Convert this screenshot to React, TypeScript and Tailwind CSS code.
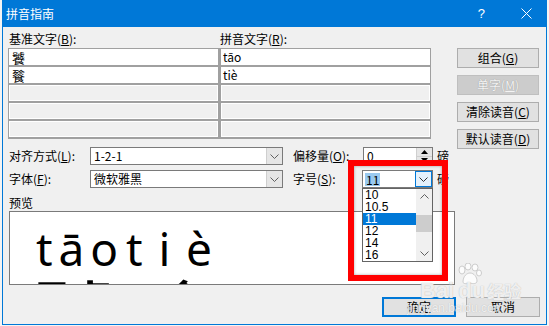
import type { ReactNode } from "react";

function Mn({ t, k, colon = true }: { t: string; k: string; colon?: boolean }) {
  return (
    <>
      {t}(<span className="underline underline-offset-1">{k}</span>){colon ? ":" : ""}
    </>
  );
}

function Btn({
  children,
  className = "border-[#adadad] bg-[#e1e1e1] text-black",
  extra = "",
}: {
  children: ReactNode;
  className?: string;
  extra?: string;
}) {
  return (
    <div className={"flex h-[20px] items-center justify-center border text-[12px] leading-none " + className + " " + extra}>
      {children}
    </div>
  );
}

function Chevron({ className = "" }: { className?: string }) {
  return (
    <svg width="9" height="5" viewBox="0 0 9 5" className={className}>
      <polyline points="0.5,0.5 4.5,4.5 8.5,0.5" fill="none" stroke="currentColor" strokeWidth="1" />
    </svg>
  );
}

function Combo({ value }: { value: string }) {
  return (
    <div className="flex h-[18px] w-[193px] items-stretch border border-[#7a7a7a] bg-white">
      <div className="flex flex-1 items-center pl-[3px] text-[12px] leading-none">{value}</div>
      <div className="flex w-[16px] items-center justify-center border-l border-[#cfcfcf] bg-[#e6e6e6] text-[#606060]">
        <Chevron />
      </div>
    </div>
  );
}

const gridRows = [
  { base: "饕", py: "tāo", filled: true },
  { base: "餮", py: "tiè", filled: true },
  { base: "", py: "", filled: false },
  { base: "", py: "", filled: false },
  { base: "", py: "", filled: false },
];

export default function App() {
  return (
    <div className="relative h-[326px] w-[549px] overflow-hidden bg-[#f4f4f4] font-['Noto_Sans_CJK_SC',sans-serif] text-black">
      <div className="ml-[2px] flex h-[325px] w-[545px] flex-col">
        {/* title bar */}
        <div className="flex h-[27px] items-center bg-[#0078d7] text-white">
          <span className="ml-[4px] text-[12px] leading-none">拼音指南</span>
          <span className="ml-auto mr-[36px] text-[13px] leading-none font-['Liberation_Sans',sans-serif]">?</span>
          <svg width="11" height="11" viewBox="0 0 11 11" className="mr-[15px]">
            <path d="M0.5 0.5 L10.5 10.5 M10.5 0.5 L0.5 10.5" stroke="white" strokeWidth="1" />
          </svg>
        </div>

        {/* body */}
        <div className="relative flex flex-1 flex-col border-x border-b border-[#0078d7] bg-[#f0f0f0] pt-[5px]">
          <div className="flex h-[107px] items-start">
            <div className="ml-[5px] flex flex-col">
              <div className="grid h-[14px] grid-cols-[212px_211px] items-center text-[12px] leading-none">
                <span className="pl-[1px]">
                  <Mn t="基准文字" k="B" />
                </span>
                <span>
                  <Mn t="拼音文字" k="R" />
                </span>
              </div>
              <div className="mt-[2px] grid w-[423px] grid-cols-[209px_209px] gap-x-[3px] gap-y-[2px] bg-[#a0a0a0] p-px pb-[2px]">
                {gridRows.map((r, i) => (
                  <div key={i} className="contents">
                    <div
                      className={
                        "flex h-[16px] items-center text-[13px] leading-none " +
                        (r.filled ? "bg-white pl-[3px]" : "border border-white bg-[#f0f0f0]")
                      }
                    >
                      {r.base}
                    </div>
                    <div
                      className={
                        "flex h-[16px] items-center text-[12px] leading-none " +
                        (r.filled ? "bg-white pl-[2px]" : "border border-white bg-[#f0f0f0]")
                      }
                    >
                      {r.py}
                    </div>
                  </div>
                ))}
              </div>
            </div>
            <div className="ml-[26px] flex w-[82px] flex-col gap-[7px] pt-[16px]">
              <Btn>
                <Mn t="组合" k="G" colon={false} />
              </Btn>
              <Btn className="border-[#bfbfbf] bg-[#cccccc] text-[#f4f4f4] [text-shadow:0_0_1px_#8a8a8a]">
                <Mn t="单字" k="M" colon={false} />
              </Btn>
              <Btn>
                <Mn t="清除读音" k="C" colon={false} />
              </Btn>
              <Btn>
                <Mn t="默认读音" k="D" colon={false} />
              </Btn>
            </div>
          </div>

          {/* alignment / offset */}
          <div className="mt-[8px] flex h-[18px] items-center text-[12px] leading-none">
            <span className="ml-[6px] w-[81px]">
              <Mn t="对齐方式" k="L" />
            </span>
            <Combo value="1-2-1" />
            <span className="ml-[10px] w-[70px]">
              <Mn t="偏移量" k="O" />
            </span>
            <div className="flex h-[18px] w-[70px] items-stretch border border-[#7a7a7a] bg-white">
              <div className="flex flex-1 items-center pl-[3px]">0</div>
              <div className="flex w-[16px] flex-col border-l border-[#cfcfcf] bg-[#e6e6e6]">
                <div className="flex flex-1 items-center justify-center border-b border-[#cfcfcf]">
                  <svg width="7" height="4" viewBox="0 0 7 4">
                    <polygon points="3.5,0 7,4 0,4" fill="black" />
                  </svg>
                </div>
                <div className="flex flex-1 items-center justify-center">
                  <svg width="7" height="4" viewBox="0 0 7 4">
                    <polygon points="0,0 7,0 3.5,4" fill="black" />
                  </svg>
                </div>
              </div>
            </div>
            <span className="ml-[4px]">磅</span>
          </div>

          {/* font / size */}
          <div className="mt-[5px] flex h-[18px] items-center text-[12px] leading-none">
            <span className="ml-[6px] w-[81px]">
              <Mn t="字体" k="F" />
            </span>
            <Combo value="微软雅黑" />
            <span className="ml-[10px] w-[69px]">
              <Mn t="字号" k="S" />
            </span>
            <div className="flex h-[18px] w-[71px] items-stretch border border-[#7a7a7a] bg-white">
              <div className="flex flex-1 items-center pl-[2px]">
                <span className="bg-[#99c9ef] px-px leading-[13px]">11</span>
              </div>
              <div className="flex w-[17px] items-center justify-center border border-[#0078d7] bg-[#e5f1fb] text-[#333]">
                <Chevron />
              </div>
            </div>
            <span className="ml-[4px]">磅</span>
          </div>

          {/* preview */}
          <div className="ml-[6px] mt-[8px] h-[14px] text-[12px] leading-[14px]">预览</div>
          <div className="ml-[6px] mt-px h-[74px] w-[446px] overflow-hidden border border-[#7a7a7a] bg-white">
            <div className="flex pl-[26px] pt-[13px] font-['Noto_Sans',sans-serif] text-[46px] leading-[46px]">
              <div className="flex w-[82px] justify-between">
                <span>t</span>
                <span>ā</span>
                <span>o</span>
              </div>
              <div className="ml-[8px] flex w-[86px] justify-between">
                <span>t</span>
                <span>i</span>
                <span>è</span>
              </div>
            </div>
            <div className="ml-[20px] mt-[1px] flex text-[88px] leading-[88px]">
              <span>饕</span>
              <span className="ml-[4px]">餮</span>
            </div>
          </div>

          {/* bottom buttons */}
          <div className="mt-[12px] flex">
            <Btn extra="ml-[379px] w-[74px] border-2 !border-[#0078d7]">确定</Btn>
            <Btn extra="ml-[10px] w-[74px]">取消</Btn>
          </div>

          {/* open size dropdown list */}
          <div className="absolute left-[359px] top-[161px] flex h-[74px] w-[71px] border border-[#646464] bg-white text-[12px]">
            <div className="flex flex-1 flex-col font-['Liberation_Sans',sans-serif]">
              {["10", "10.5", "11", "12", "14", "16"].map((v) => (
                <div
                  key={v}
                  className={
                    "flex h-[12px] items-center pl-[2px] leading-none " +
                    (v === "11" ? "bg-[#0078d7] text-white" : "")
                  }
                >
                  {v}
                </div>
              ))}
            </div>
            <div className="flex w-[16px] flex-col items-center bg-[#f0f0f0] text-[#606060]">
              <Chevron className="mt-[5px] rotate-180" />
              <div className="mt-[16px] h-[17px] w-[16px] bg-[#cdcdcd]" />
              <Chevron className="mt-auto mb-[5px]" />
            </div>
          </div>

          {/* red annotation box */}
          <div className="pointer-events-none absolute left-[345px] top-[133px] h-[121px] w-[100px] border-[6px] border-[#ff0000] shadow-[inset_0_0_3px_rgba(0,0,0,0.35)]" />
        </div>
      </div>

      {/* watermark */}
      <svg width="26" height="22" viewBox="0 0 26 22" className="pointer-events-none absolute left-[456px] top-[263px]">
        <g fill="rgba(255,255,255,0.8)" stroke="#c2c2c2" strokeWidth="0.8">
          <ellipse cx="6" cy="7" rx="3" ry="4" />
          <ellipse cx="12" cy="3.5" rx="3" ry="3.5" />
          <ellipse cx="19" cy="4.5" rx="3" ry="3.5" />
          <ellipse cx="23" cy="10" rx="2.5" ry="3" />
          <path d="M7 19 C7 13 11 10 14 10 C18 10 21 14 21 18 C21 21 17 21 14 20 C11 21 7 21 7 19 Z" />
        </g>
      </svg>
      <div className="pointer-events-none absolute left-[420px] top-[280px] flex items-baseline font-['Liberation_Sans',sans-serif] font-bold leading-none text-white/80 [text-shadow:0_0_1px_#a8a8a8]">
        <span className="text-[22px]">Bai</span>
        <span className="ml-[4px] text-[22px]">du</span>
        <span className="ml-[2px] font-['Noto_Sans_CJK_SC',sans-serif] text-[17px]">经验</span>
      </div>
      <div className="pointer-events-none absolute left-[407px] top-[302px] font-['Liberation_Sans',sans-serif] text-[12px] leading-none text-white/80 [text-shadow:0_0_1px_#a8a8a8]">
        jingyan.baidu.com
      </div>
    </div>
  );
}
